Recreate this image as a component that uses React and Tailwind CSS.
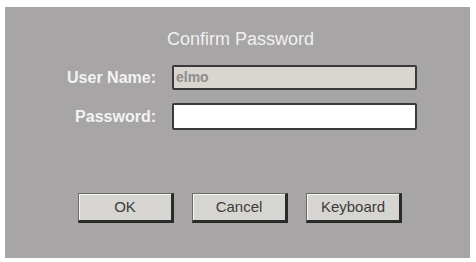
import React from 'react';

const font = { fontFamily: '"Liberation Sans", Arial, sans-serif' };

function Button({ children }) {
    return (
        <button
            type="button"
            className="h-[30px] w-[96px] border border-[#6b6b6b] border-r-[3px] border-b-[3px] border-r-[#2a2a2a] border-b-[#2a2a2a] bg-[#d7d5d2] text-[15px] text-[#3b3b3b] shadow-[inset_1px_1px_0_#f4f3f1]"
        >
            {children}
        </button>
    );
}

export default function App() {
    return (
        <div className="h-[262px] w-[476px] bg-white pl-[5px] pt-[7px]" style={font}>
            <div className="flex h-[251px] w-[465px] flex-col bg-[#a7a5a6] pt-[21px]">
                {/* Title */}
                <div className="pl-[6px] text-center text-[18px] leading-[23px] text-[#f1f0f0]">Confirm Password</div>

                {/* Fields */}
                <div className="mt-[14px] flex flex-col gap-[13px]">
                    <div className="flex items-center">
                        <label className="w-[151px] text-right text-[16px] font-bold text-[#f3f3f3]">User Name:</label>
                        <div className="ml-[16px] flex h-[25px] w-[245px] items-center rounded-[2px] border-2 border-[#3a3a3a] bg-[#d8d6cf] pl-[2px] text-[14px] font-bold text-[#8e8c8b]">
                            elmo
                        </div>
                    </div>
                    <div className="flex items-center">
                        <label className="w-[151px] text-right text-[16px] font-bold text-[#f3f3f3]">Password:</label>
                        <input
                            type="password"
                            className="ml-[16px] h-[27px] w-[245px] rounded-[2px] border-2 border-[#3a3a3a] bg-white outline-none"
                        />
                    </div>
                </div>

                {/* Buttons */}
                <div className="mt-[63px] flex gap-[18px] pl-[73px]">
                    <Button>OK</Button>
                    <Button>Cancel</Button>
                    <Button>Keyboard</Button>
                </div>
            </div>
        </div>
    );
}
